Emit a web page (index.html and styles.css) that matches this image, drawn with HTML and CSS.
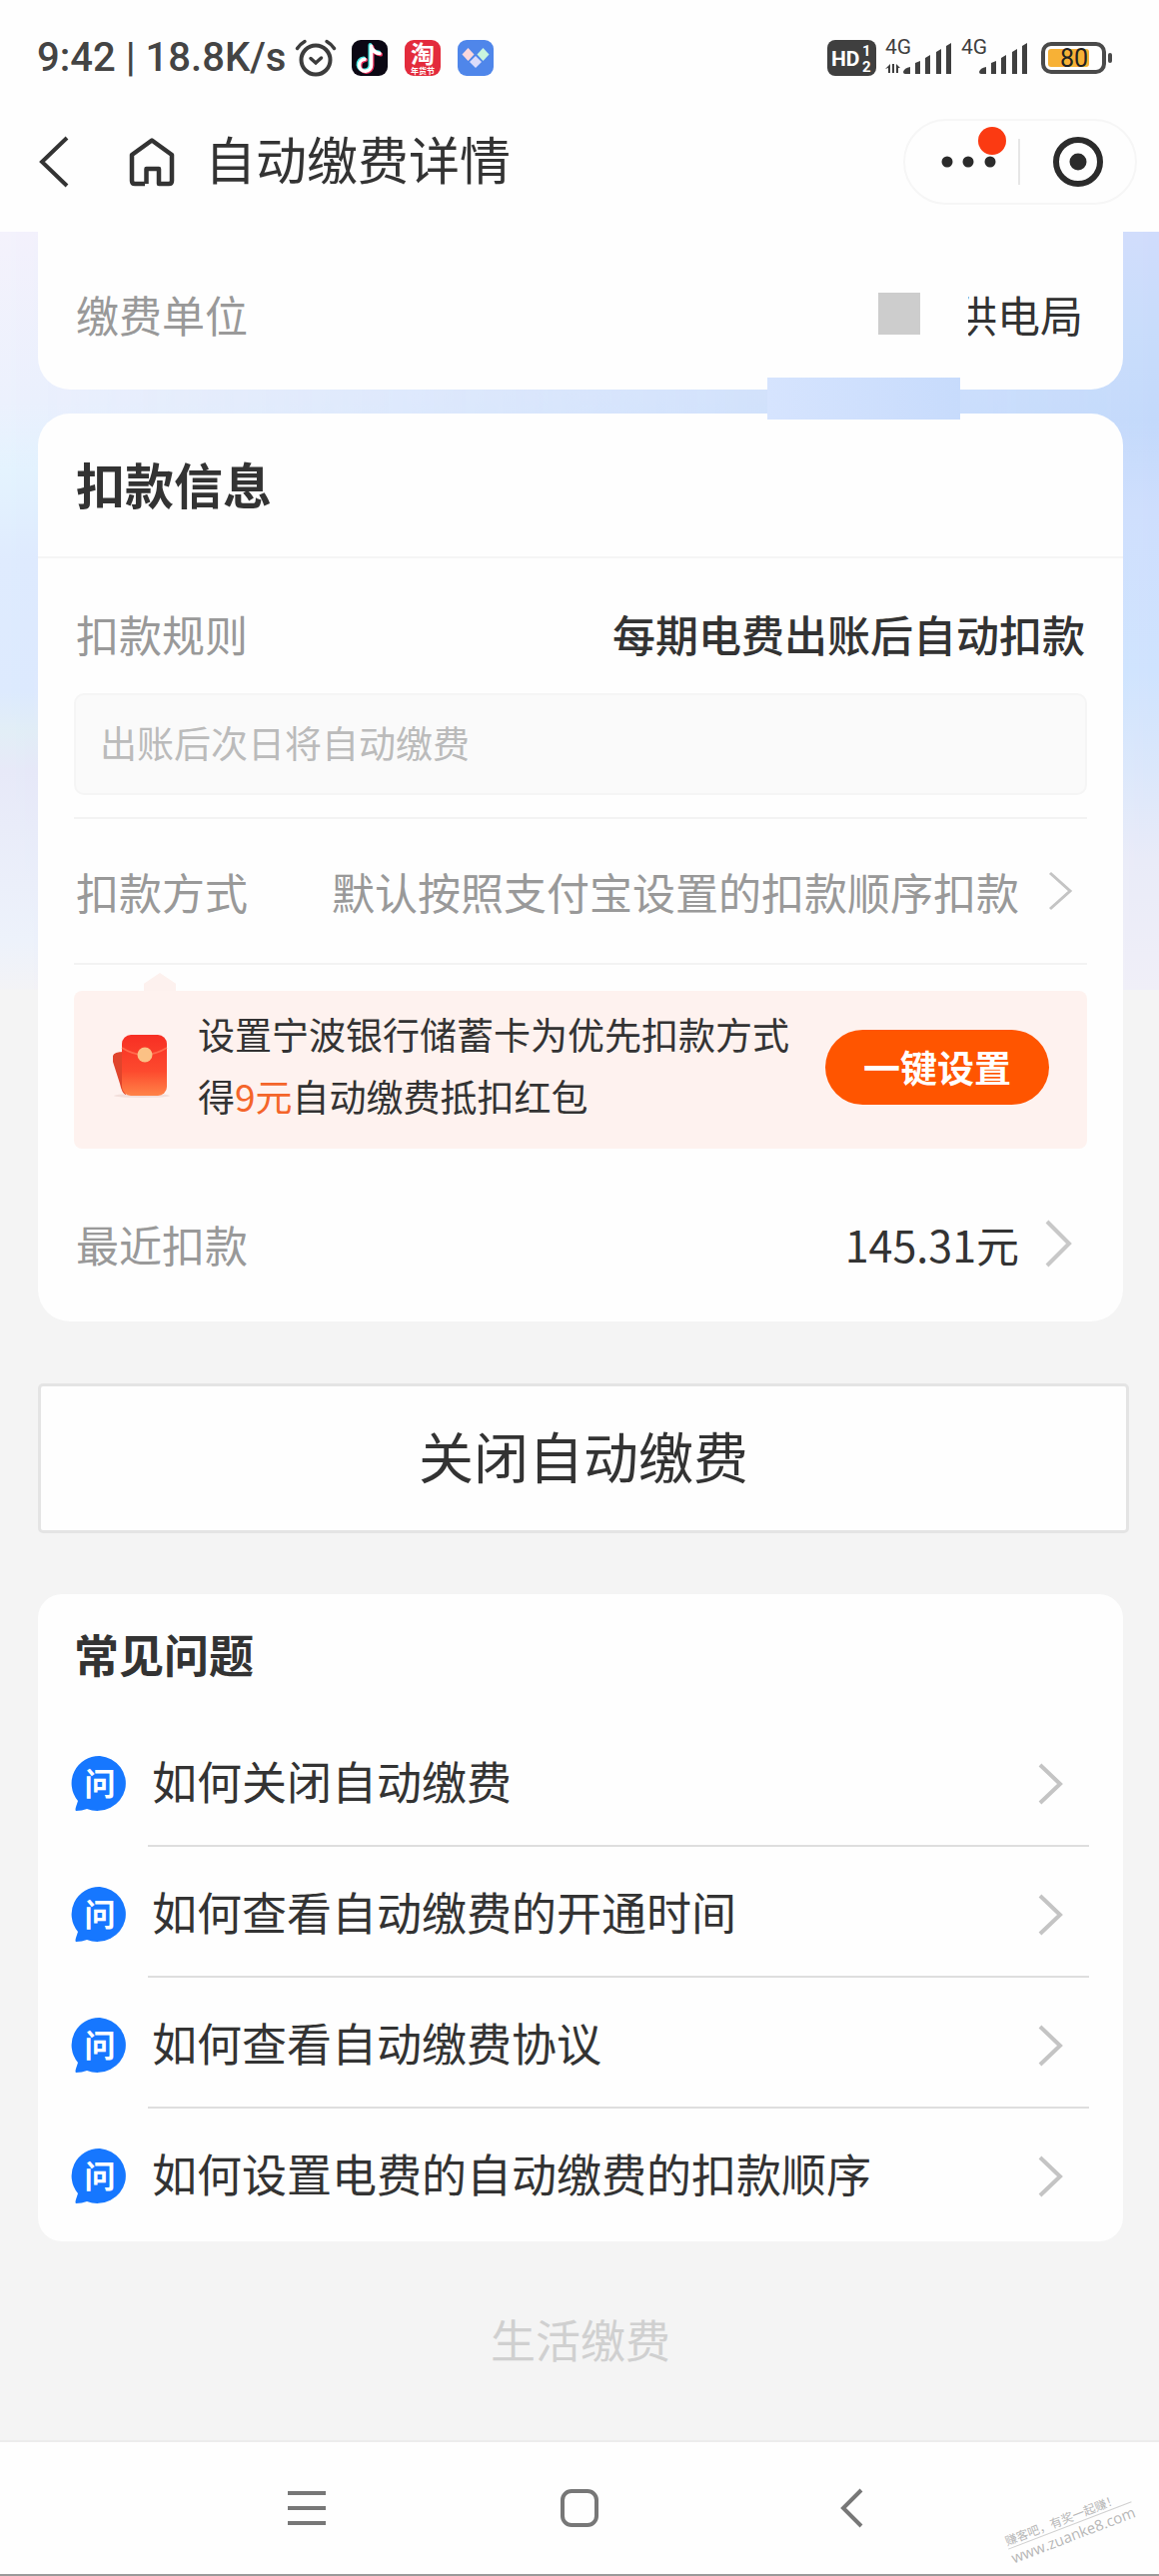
FILE: index.html
```html
<!DOCTYPE html>
<html lang="zh-Hans">
<head>
  <meta charset="UTF-8">
  <meta name="viewport" content="width=device-width, initial-scale=1.0">
  <title>自动缴费详情</title>
  <link rel="stylesheet" href="styles.css">
</head>
<body>
  <!-- 状态栏 -->
  <div class="status-bar">
    <div class="status-left">
      <span class="status-time">9:42 | 18.8K/s</span>
      <svg class="icon-alarm" width="42" height="38" viewBox="0 0 42 38" fill="none" stroke="#3c3c3c" stroke-linecap="round">
        <circle cx="21" cy="21" r="14.5" stroke-width="4"/>
        <path d="M2.5 9.5 Q5.500 5 10 2.500M39.500 9.500 Q36.500 5 32 2.500" stroke-width="3.500"/>
        <path d="M16 19.500 L21 24 L26.500 19" stroke-width="3.500"/>
      </svg>
      <svg width="36" height="36" viewBox="0 0 36 36">
        <rect width="36" height="36" rx="9" fill="#0b0814"/>
        <g fill="none" stroke-width="4" stroke-linecap="round">
          <path d="M18.500 5 V24 A6 6 0 1 1 12 18.500 M18.500 6 Q21 12 27 12.500" stroke="#3fe8e2"/>
          <path d="M20.500 7 V26 A6 6 0 1 1 14 20 M20.500 8 Q23 14 29 14.500" stroke="#f0315e"/>
          <path d="M19.500 6 V25 A6 6 0 1 1 13 19.300 M19.500 7 Q22 13 28 13.500" stroke="#fff" stroke-width="3.500"/>
        </g>
      </svg>
      <svg width="36" height="48" viewBox="0 -6 36 48">
        <rect width="36" height="36" rx="9" fill="#e32b3c"/>
        <text x="18" y="23" class="badge-text" font-size="24">淘</text>
        <text x="18" y="34" class="badge-text" font-size="8">年货节</text>
      </svg>
      <svg width="36" height="36" viewBox="0 0 36 36">
        <rect width="36" height="36" rx="9" fill="#4f86ea"/>
        <path d="M10.500 8 L16.500 14.500 L10.500 21 L4.500 14.500Z" fill="#fbd7dc"/>
        <path d="M25.500 8 L31.500 14.500 L25.500 21 L19.500 14.500Z" fill="#c9f5dd"/>
        <path d="M18 16 L24 22 L18 28 L12 22Z" fill="#dcdcfb"/>
      </svg>
    </div>
    <div class="status-right">
      <svg width="49" height="36" viewBox="0 0 49 36">
        <rect width="49" height="36" rx="8" fill="#3f3f3f"/>
        <text x="4" y="26" class="hd-text" font-size="21">HD</text>
        <text x="35" y="16" class="hd-text" font-size="15">1</text>
        <text x="35" y="32" class="hd-text" font-size="15">2</text>
      </svg>
      <svg width="68" height="48" viewBox="0 -6 68 48" fill="#3f3f3f">
        <text x="1" y="14" class="net-text">4G</text>
        <path d="M1 29 L6 24 V33 H4 V28Z M10 24 V33 H8 V24Z M12 24 L16 28 H14 V33 H12Z"/>
        <path d="M19 32 Q20 28 26 27 V34 H21 Q19 34 19 32Z M31 23 L36 21 V34 H31Z M41 18 L46 15 V34 H41Z M52 12 L57 9 V34 H52Z M62 6 L67 3 V34 H62Z"/>
      </svg>
      <svg width="68" height="48" viewBox="0 -6 68 48" fill="#3f3f3f">
        <text x="1" y="14" class="net-text">4G</text>
        <path d="M19 32 Q20 28 26 27 V34 H21 Q19 34 19 32Z M31 23 L36 21 V34 H31Z M41 18 L46 15 V34 H41Z M52 12 L57 9 V34 H52Z M62 6 L67 3 V34 H62Z"/>
      </svg>
      <svg class="icon-battery" width="72" height="32" viewBox="0 0 72 32">
        <rect x="2" y="2" width="61" height="28" rx="8" fill="#fff" stroke="#4a4a4a" stroke-width="4"/>
        <rect x="7" y="7" width="41" height="18" rx="3" fill="#f7b136"/>
        <rect x="67" y="11" width="4" height="10" rx="2" fill="#4a4a4a"/>
        <text x="33" y="25" class="battery-text">80</text>
      </svg>
    </div>
  </div>

  <!-- 标题栏 -->
  <header class="nav-bar">
    <button class="icon-btn" aria-label="返回">
      <svg width="34" height="52" viewBox="0 0 34 52" fill="none" stroke="#333" stroke-width="4">
        <path d="M31 2 L6 26 L31 50"/>
      </svg>
    </button>
    <button class="icon-btn home-btn" aria-label="首页">
      <svg width="46" height="50" viewBox="0 0 46 50" fill="none" stroke="#333" stroke-width="4.500" stroke-linejoin="round">
        <path d="M16 47 H6 Q3 47 3 44 V18 L23 3.500 L43 18 V44 Q43 47 40 47 H30 V32 H17.500 V47"/>
      </svg>
    </button>
    <h1 class="nav-title">自动缴费详情</h1>
    <div class="capsule">
      <button class="icon-btn more-btn" aria-label="更多">
        <svg width="56" height="12" viewBox="0 0 56 12" fill="#2b2b2b">
          <circle cx="6" cy="6" r="5.500"/><circle cx="27" cy="6" r="5.500"/><circle cx="49" cy="6" r="5.500"/>
        </svg>
        <span class="red-dot"></span>
      </button>
      <span class="capsule-line"></span>
      <button class="icon-btn" aria-label="关闭">
        <svg width="50" height="50" viewBox="0 0 50 50">
          <circle cx="25" cy="25" r="22" fill="none" stroke="#2b2b2b" stroke-width="6"/>
          <circle cx="25" cy="25" r="8.500" fill="#2b2b2b"/>
        </svg>
      </button>
    </div>
  </header>

  <main class="content">
    <!-- 缴费单位 -->
    <section class="card unit-card">
      <div class="row unit-row">
        <span class="label">缴费单位</span>
        <span class="unit-value"><i class="mosaic"></i><span class="unit-name">供电局</span></span>
      </div>
      <i class="smudge"></i>
    </section>

    <!-- 扣款信息 -->
    <section class="card pay-card">
      <h2 class="pay-title">扣款信息</h2>
      <div class="pay-body">
        <div class="row rule-row">
          <span class="label">扣款规则</span>
          <span class="value strong">每期电费出账后自动扣款</span>
        </div>
        <p class="hint">出账后次日将自动缴费</p>
        <a class="row method-row" href="#">
          <span class="label">扣款方式</span>
          <span class="label">默认按照支付宝设置的扣款顺序扣款</span>
          <svg class="chevron" width="28" height="42" viewBox="0 0 28 42" fill="none" stroke="#c4c4c4" stroke-width="3">
            <path d="M5 3 L25 21 L5 39"/>
          </svg>
        </a>
        <div class="promo">
          <svg class="packet" width="60" height="66" viewBox="0 0 60 66">
            <defs>
              <linearGradient id="packet" x1="0" y1="0" x2="0" y2="1">
                <stop offset="0" stop-color="#f72f24"/>
                <stop offset="0.600" stop-color="#fd4a2e"/>
                <stop offset="1" stop-color="#ff8348"/>
              </linearGradient>
            </defs>
            <ellipse cx="32" cy="62" rx="28" ry="2" fill="#f2dfdb"/>
            <path d="M3 22 Q4 18 14 18 L16 61 Q12 60 10 50 L3 28Z" fill="#e0452c"/>
            <rect x="12" y="1" width="45" height="61" rx="9" fill="url(#packet)"/>
            <path d="M12 14 Q34 28 57 14" fill="none" stroke="#ff6a4c" stroke-width="1.500"/>
            <circle cx="35" cy="21" r="7.500" fill="#fbc185"/>
          </svg>
          <p class="promo-text">设置宁波银行储蓄卡为优先扣款方式<br>得<em>9元</em>自动缴费抵扣红包</p>
          <button class="promo-btn">一键设置</button>
        </div>
        <a class="row recent-row" href="#">
          <span class="label">最近扣款</span>
          <span class="value">145.31元</span>
          <svg class="chevron" width="28" height="50" viewBox="0 0 28 50" fill="none" stroke="#c8c8c8" stroke-width="4">
            <path d="M2 3 L24 25 L2 47"/>
          </svg>
        </a>
      </div>
    </section>

    <button class="close-btn">关闭自动缴费</button>

    <!-- 常见问题 -->
    <section class="card faq-card">
      <h2 class="faq-title">常见问题</h2>
      <ul class="faq-list">
        <li>
          <a class="faq-item" href="#">
            <svg class="faq-icon" width="58" height="56" viewBox="0 0 58 56"><use href="#ask"/><text x="29" y="39" class="ask-text">问</text></svg>
            <span class="faq-text">如何关闭自动缴费</span>
            <svg width="28" height="42" viewBox="0 0 28 42"><use href="#arrow"/></svg>
          </a>
        </li>
        <li>
          <a class="faq-item" href="#">
            <svg class="faq-icon" width="58" height="56" viewBox="0 0 58 56"><use href="#ask"/><text x="29" y="39" class="ask-text">问</text></svg>
            <span class="faq-text">如何查看自动缴费的开通时间</span>
            <svg width="28" height="42" viewBox="0 0 28 42"><use href="#arrow"/></svg>
          </a>
        </li>
        <li>
          <a class="faq-item" href="#">
            <svg class="faq-icon" width="58" height="56" viewBox="0 0 58 56"><use href="#ask"/><text x="29" y="39" class="ask-text">问</text></svg>
            <span class="faq-text">如何查看自动缴费协议</span>
            <svg width="28" height="42" viewBox="0 0 28 42"><use href="#arrow"/></svg>
          </a>
        </li>
        <li>
          <a class="faq-item" href="#">
            <svg class="faq-icon" width="58" height="56" viewBox="0 0 58 56"><use href="#ask"/><text x="29" y="39" class="ask-text">问</text></svg>
            <span class="faq-text">如何设置电费的自动缴费的扣款顺序</span>
            <svg width="28" height="42" viewBox="0 0 28 42"><use href="#arrow"/></svg>
          </a>
        </li>
      </ul>
    </section>

    <p class="brand">生活缴费</p>
  </main>

  <!-- 系统导航键 -->
  <nav class="sys-nav">
    <button class="icon-btn" aria-label="菜单">
      <svg width="40" height="40" viewBox="0 0 40 40" stroke="#777" stroke-width="4">
        <path d="M1 5 H39 M1 20 H39 M1 35 H39"/>
      </svg>
    </button>
    <button class="icon-btn" aria-label="主屏幕">
      <svg width="40" height="40" viewBox="0 0 40 40" fill="none" stroke="#777" stroke-width="4">
        <rect x="3" y="3" width="34" height="34" rx="9"/>
      </svg>
    </button>
    <button class="icon-btn" aria-label="后退">
      <svg width="40" height="40" viewBox="0 0 40 40" fill="none" stroke="#777" stroke-width="4">
        <path d="M29 2 L11 20 L29 38"/>
      </svg>
    </button>
    <div class="watermark">
      <span class="watermark-cn">赚客吧，有奖一起赚！</span>
      <span class="watermark-url">www.zuanke8.com</span>
    </div>
  </nav>

  <!-- 公用图标 -->
  <svg class="sprite" width="0" height="0">
    <symbol id="ask" viewBox="0 0 58 56">
      <path d="M29 0 A28.500 27.500 0 1 1 16 53 Q11 55 5 55 Q4 54 5 51 L7 45 A28 27.500 0 0 1 29 0Z" fill="#1677ff"/>
    </symbol>
    <symbol id="arrow" viewBox="0 0 28 42">
      <path d="M3 2 L23 21 L3 40" fill="none" stroke="#c4c4c4" stroke-width="4"/>
    </symbol>
  </svg>
</body>
</html>
```

FILE: styles.css
```css
* {
  box-sizing: border-box;
}

body {
  margin: 0;
  min-height: 100vh;
  display: flex;
  flex-direction: column;
  background: #f4f4f4;
  color: #333;
  font-family: "Noto Sans CJK SC", sans-serif;
}

h1, h2, p, ul {
  margin: 0;
  padding: 0;
}

a {
  color: inherit;
  text-decoration: none;
}

svg {
  display: block;
  flex: none;
}

button {
  font-family: inherit;
  cursor: pointer;
}

.icon-btn {
  display: block;
  padding: 0;
  border: none;
  background: none;
}

.sprite {
  position: absolute;
}

/* 状态栏 */
.status-bar {
  display: flex;
  justify-content: space-between;
  align-items: center;
  padding: 34px 46px 0 37px;
  background: #fefefe;
}

.status-left,
.status-right {
  display: flex;
  align-items: center;
  height: 48px;
}

.status-left {
  gap: 17px;
}

.status-right {
  gap: 8px;
}

.status-time {
  margin-right: -8px;
  font-family: Roboto, sans-serif;
  font-size: 40px;
  font-weight: 500;
  line-height: 48px;
  color: #444;
}

.icon-alarm {
  margin-right: -2px;
}

.icon-battery {
  margin-left: 5px;
}

.badge-text {
  fill: #fff;
  text-anchor: middle;
  font-weight: 700;
}

.hd-text {
  fill: #fff;
  font-family: Roboto, sans-serif;
  font-weight: 700;
}

.net-text {
  font-family: Roboto, sans-serif;
  font-size: 21px;
}

.battery-text {
  fill: #222;
  font-family: Roboto, sans-serif;
  font-size: 25px;
  text-anchor: middle;
}

/* 标题栏 */
.nav-bar {
  display: flex;
  align-items: center;
  padding: 37px 22px 27px 36px;
  background: #fefefe;
}

.home-btn {
  margin-left: 59px;
}

.nav-title {
  flex: 1;
  margin-left: 30px;
  padding-bottom: 8px;
  font-size: 51px;
  line-height: 72px;
  font-weight: 400;
}

.capsule {
  display: flex;
  align-items: center;
  padding: 16px 32px 16px 36px;
  border: 2px solid #f6f6f6;
  border-radius: 44px;
}

.more-btn {
  position: relative;
}

/* 更多按钮右上角的红点 */
.red-dot {
  position: absolute;
  top: -29px;
  right: -9px;
  width: 28px;
  height: 28px;
  border-radius: 50%;
  background: #fb3a12;
}

.capsule-line {
  width: 2px;
  height: 46px;
  margin: 0 33px 0 21px;
  background: #e6e6e6;
}

/* 内容区，顶部两侧的浅蓝底色 */
.content {
  position: relative;
  flex: 1;
  padding: 0 36px 0 38px;
  background: linear-gradient(#f4f2fc, #ecf1fd 170px, #e4f3fe 240px, #dfebfe 330px, #ddeafe 460px, #e2eef6 500px, #e7e9f8 540px, #edf2fb 710px, #f3f3f6 758px, #f4f4f4 759px);
}

.content::before {
  content: "";
  position: absolute;
  top: 0;
  left: 0;
  right: 0;
  height: 759px;
  background: linear-gradient(#d0dcfc, #c8dcfb 100px, #c3d9fb 190px, #cedefd 280px, #cfe3fe 440px, #dbe7fb 540px, #e9ebf8 630px, #f0eff8);
  -webkit-mask-image: linear-gradient(to right, transparent, #000);
  mask-image: linear-gradient(to right, transparent, #000);
}

.card {
  position: relative;
  background: #fefefe;
}

.row {
  display: flex;
  align-items: center;
  justify-content: space-between;
  font-size: 43px;
  line-height: 60px;
}

.label {
  color: #999;
}

.strong {
  font-weight: 500;
}

/* 缴费单位 */
.unit-card {
  padding: 52px 40px 46px 38px;
  border-radius: 0 0 32px 32px;
}

.unit-value {
  display: flex;
  align-items: center;
  gap: 34px;
}

.mosaic {
  width: 42px;
  height: 42px;
  background: #cdcdcd;
}

.unit-name {
  position: relative;
}

.unit-name::before {
  content: "";
  position: absolute;
  top: 0;
  left: 0;
  width: 14px;
  height: 60px;
  background: #fefefe;
}

.smudge {
  position: absolute;
  z-index: 1;
  right: 163px;
  bottom: -30px;
  width: 193px;
  height: 42px;
  background: linear-gradient(to right, #d6e4fe, #c7dbfc);
}

/* 扣款信息 */
.pay-card {
  margin-top: 24px;
  border-radius: 32px;
}

.pay-title {
  padding: 34px 38px 38px;
  border-bottom: 2px solid #f5f5f5;
  font-size: 49px;
  line-height: 71px;
  font-weight: 700;
}

.pay-body {
  padding: 0 36px;
}

.rule-row {
  padding: 45px 2px 30px;
}

.hint {
  padding: 18px 24px 22px;
  border: 2px solid #f5f5f5;
  border-radius: 10px;
  background: #fafafa;
  color: #bbb;
  font-size: 37px;
  line-height: 58px;
}

.method-row {
  margin-top: 22px;
  padding: 42px 14px 42px 2px;
  border-top: 2px solid #f3f3f3;
  border-bottom: 2px solid #f3f3f3;
}

.row .chevron {
  margin-left: 26px;
}

.method-row .label:first-child,
.recent-row .label {
  flex: 1;
}

.promo {
  position: relative;
  display: flex;
  align-items: center;
  margin-top: 26px;
  padding: 12px 38px 18px 36px;
  border-radius: 8px;
  background: #fef2ef;
}

/* 提示框的小三角 */
.promo::before {
  content: "";
  position: absolute;
  top: -18px;
  left: 70px;
  width: 32px;
  height: 18px;
  background: #fdf1ee;
  clip-path: polygon(50% 0, 100% 60%, 100% 100%, 0 100%, 0 60%);
}

.promo-text {
  flex: 1;
  margin-left: 28px;
  padding-bottom: 4px;
  font-size: 37px;
  line-height: 62px;
}

.promo-text em {
  font-style: normal;
  color: #f4652a;
}

.promo-btn {
  height: 75px;
  padding: 0 38px;
  border: none;
  border-radius: 38px;
  background: #ff5500;
  color: #fff;
  font-size: 37px;
  font-weight: 700;
}

.recent-row {
  padding: 65px 14px 48px 2px;
}

/* 关闭按钮 */
.close-btn {
  position: relative;
  display: block;
  width: calc(100% + 6px);
  margin-top: 62px;
  padding: 29px 0 37px;
  border: 3px solid #e4e4e4;
  border-radius: 5px;
  background: #fefefe;
  color: #333;
  font-size: 55px;
  line-height: 78px;
}

/* 常见问题 */
.faq-card {
  margin-top: 61px;
  padding-bottom: 2px;
  border-radius: 24px;
}

.faq-title {
  padding: 27px 36px 30px;
  font-size: 45px;
  line-height: 65px;
  font-weight: 700;
}

.faq-list {
  list-style: none;
}

.faq-item {
  position: relative;
  display: flex;
  align-items: center;
  padding: 32px 58px 27px 33px;
  font-size: 45px;
  line-height: 66px;
}

.faq-list li + li .faq-item::before {
  content: "";
  position: absolute;
  top: -2px;
  left: 110px;
  right: 34px;
  height: 2px;
  background: #dedede;
}

.faq-text {
  flex: 1;
  margin-left: 23px;
  padding-bottom: 6px;
}

.ask-text {
  fill: #fff;
  text-anchor: middle;
  font-size: 31px;
  font-weight: 700;
}

.brand {
  padding: 64px 0 66px;
  text-align: center;
  color: #d0d0d0;
  font-size: 45px;
  line-height: 68px;
}

/* 系统导航键 */
.sys-nav {
  position: relative;
  display: flex;
  justify-content: center;
  gap: 233px;
  padding: 46px 0;
  border-top: 2px solid #ececec;
  border-bottom: 2px solid #9a9a9a;
  background: #fefefe;
}

/* 右下角水印 */
.watermark {
  position: absolute;
  right: 24px;
  bottom: 30px;
  display: flex;
  flex-direction: column;
  color: #b8b8b8;
  font-size: 12px;
  line-height: 17px;
  transform: rotate(-21deg);
}

.watermark-url {
  border-top: 1px solid #d0d0d0;
  font-family: "Open Sans", sans-serif;
  font-size: 15px;
  line-height: 18px;
}
```
